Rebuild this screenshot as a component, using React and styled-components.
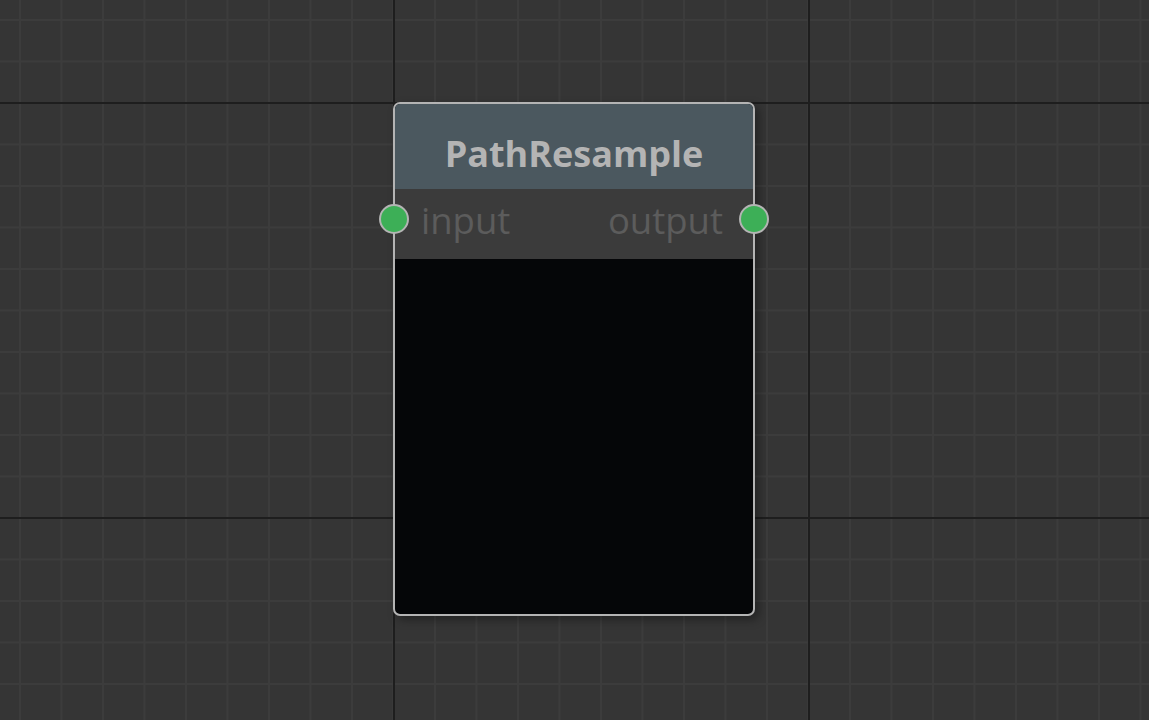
import React from "react";
import styled, {createGlobalStyle} from "styled-components";

const GlobalStyle = createGlobalStyle`
  html, body {
    margin: 0;
    padding: 0;
    background: #353535;
  }
  #root {
    width: 100vw;
    height: 100vh;
  }
`;

const Canvas = styled.div`
  position: relative;
  width: 100%;
  height: 100%;
  overflow: hidden;
  background-color: #353535;
  background-image:
    linear-gradient(to right, #1e1e1e 2px, transparent 2px),
    linear-gradient(to bottom, #1e1e1e 2px, transparent 2px),
    linear-gradient(to right, #3c3c3c 2px, transparent 2px),
    linear-gradient(to bottom, #3c3c3c 2px, transparent 2px);
  background-size: 415px 415px, 415px 415px, 41.5px 41.5px, 41.5px 41.5px;
  background-position: 393px 0, 0 102px, 19px 0, 0 19px;
  font-family: "Open Sans", "Noto Sans", sans-serif;
`;

const Node = styled.div`
  position: absolute;
  left: ${(p) => p.x}px;
  top: ${(p) => p.y}px;
  width: ${(p) => p.w}px;
  height: ${(p) => p.h}px;
  box-sizing: border-box;
  border: 2px solid #b4b4b4;
  border-radius: 7px;
  background: #050608;
  box-shadow: 4px 4px 10px rgba(0, 0, 0, 0.35);
  display: flex;
  flex-direction: column;
`;

const Header = styled.div`
  height: 85px;
  flex: none;
  background: #4b585f;
  border-radius: 5px 5px 0 0;
  display: flex;
  align-items: center;
  justify-content: center;
  color: #b4b4b4;
  font-weight: 700;
  font-size: 36px;
  padding-top: 14px;
  box-sizing: border-box;
`;

const PortRow = styled.div`
  position: relative;
  height: 70px;
  flex: none;
  background: #3b3b3b;
  display: flex;
  align-items: center;
  justify-content: space-between;
  padding: 0 30px 8px 26px;
  color: #5c5c5c;
  font-size: 36.5px;
  box-sizing: border-box;
`;

const Port = styled.span`
  position: absolute;
  top: 15px;
  ${(p) => (p.side === "left" ? "left: -16px;" : "right: -16px;")}
  width: 26px;
  height: 26px;
  border-radius: 50%;
  background: #3daf57;
  border: 2px solid #b4b4b4;
`;

const Body = styled.div`
  flex: 1;
  border-radius: 0 0 5px 5px;
`;

export default function App() {
  return (
    <>
      <GlobalStyle />
      <Canvas>
        <Node x={393} y={102} w={362} h={514}>
          <Header>PathResample</Header>
          <PortRow>
            <Port side="left" />
            <span>input</span>
            <span>output</span>
            <Port side="right" />
          </PortRow>
          <Body />
        </Node>
      </Canvas>
    </>
  );
}
